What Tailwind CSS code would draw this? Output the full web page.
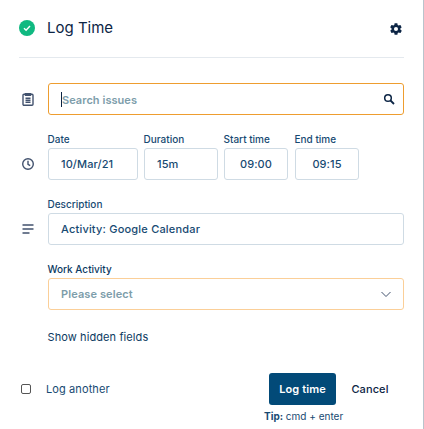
<!DOCTYPE html>
<html lang="en">
<head>
  <meta charset="UTF-8">
  <title>Log Time</title>
  <script src="https://cdn.jsdelivr.net/npm/@tailwindcss/browser@4"></script>
</head>
<body class="bg-white font-['Inter',sans-serif] overflow-hidden">
  <div class="w-[424px] h-[429px] relative border-r border-[#b9c4cc] pl-[19px] pr-[19px] overflow-hidden">
    <!-- Header -->
    <header class="h-[58px] flex items-center justify-between border-b border-[#e4e9ee] pb-[1px]">
      <div class="flex items-center">
        <svg class="w-4 h-4 mr-3" viewBox="0 0 16 16">
          <circle cx="8" cy="8" r="8" fill="#10b981"/>
          <path d="M5 8.200l2.100 2.100L11 6" fill="none" stroke="#fff" stroke-width="1.400"/>
        </svg>
        <h1 class="text-[15px] leading-6 text-[#0c2545]">Log Time</h1>
      </div>
      <svg class="w-3.5 h-3.5 mr-[1px] mt-0.5" viewBox="0 0 24 24" fill="#0c2545">
        <path d="M19.4 13c.1-.3.1-.7.1-1s0-.7-.1-1l2.100-1.600c.2-.2.2-.4.1-.6l-2-3.500c-.1-.2-.4-.3-.6-.2l-2.500 1c-.5-.4-1.100-.7-1.700-1l-.4-2.600C14.400 2.200 14.200 2 14 2h-4c-.2 0-.4.2-.5.4l-.4 2.600c-.6.3-1.200.6-1.700 1l-2.500-1c-.2-.1-.5 0-.6.2l-2 3.500c-.1.2-.1.4.1.6L4.500 11c0 .3-.1.7-.1 1s0 .7.1 1l-2.100 1.600c-.2.2-.2.4-.1.6l2 3.500c.1.2.4.3.6.2l2.500-1c.5.4 1.100.7 1.700 1l.4 2.600c.1.3.3.5.5.5h4c.2 0 .4-.2.5-.4l.4-2.600c.6-.3 1.200-.6 1.700-1l2.500 1c.2.1.5 0 .6-.2l2-3.500c.1-.2.1-.4-.1-.6L19.400 13zM12 15.500a3.500 3.500 0 1 1 0-7 3.500 3.500 0 0 1 0 7z"/>
      </svg>
    </header>

    <!-- Issue search -->
    <div class="flex items-center mt-[25px]">
      <svg class="w-3.5 h-3.5 ml-0.5 mr-[13px]" viewBox="0 0 14 14" fill="none" stroke="#42526e" stroke-width="1.400">
        <rect x="2" y="2.200" width="10" height="11" rx="1"/>
        <path d="M4.500 1.600h5V3.400h-5zM4.500 6.200h5M4.500 8.200h5M4.500 10.300h5"/>
      </svg>
      <div class="flex-1 h-8 border border-[#ee9d2f] rounded-[3px] flex items-center pl-3 pr-2 justify-between">
        <span class="text-[11px] font-semibold tracking-[0.05px] text-[#7d9daa] border-l border-[#0c2545] leading-[14px] pt-[1px]">Search issues</span>
        <svg class="w-3 h-3" viewBox="0 0 12 12" fill="none" stroke="#0c2545">
          <circle cx="5" cy="5" r="3.300" stroke-width="1.500"/>
          <path d="M7.500 7.500L11 11" stroke-width="1.800"/>
        </svg>
      </div>
    </div>

    <!-- Date and time -->
    <div class="flex items-end mt-[18px]">
      <svg class="w-3.5 h-3.5 ml-0.5 mr-[13px] mb-[9px]" viewBox="0 0 14 14" fill="none" stroke="#42526e" stroke-width="1.400">
        <circle cx="7" cy="7" r="5.300"/>
        <path d="M7 3.800V7.300L9.200 8.700"/>
      </svg>
      <div class="flex">
        <label class="w-[90px] mr-[6px]">
          <span class="block text-[10px] leading-3 font-medium text-[#174a72] mb-[3px] -ml-[0.5px]">Date</span>
          <span class="h-8 border border-[#cfdbe4] rounded-[3px] flex items-center pl-3 text-[11px] font-medium tracking-[0.1px] text-[#174a72]">10/Mar/21</span>
        </label>
        <label class="w-[74px] mr-[6px]">
          <span class="block text-[10px] leading-3 font-medium text-[#174a72] mb-[3px] -ml-[0.5px]">Duration</span>
          <span class="h-8 border border-[#cfdbe4] rounded-[3px] flex items-center pl-3 text-[11px] font-medium tracking-[0.1px] text-[#174a72]">15m</span>
        </label>
        <label class="w-[64px] mr-[7px]">
          <span class="block text-[10px] leading-3 font-medium text-[#174a72] mb-[3px] -ml-[0.5px]">Start time</span>
          <span class="h-8 border border-[#cfdbe4] rounded-[3px] flex items-center justify-center text-[11px] font-medium tracking-[0.1px] text-[#174a72]">09:00</span>
        </label>
        <label class="w-[64px]">
          <span class="block text-[10px] leading-3 font-medium text-[#174a72] mb-[3px] -ml-[0.5px]">End time</span>
          <span class="h-8 border border-[#cfdbe4] rounded-[3px] flex items-center justify-center text-[11px] font-medium tracking-[0.1px] text-[#174a72]">09:15</span>
        </label>
      </div>
    </div>

    <!-- Description -->
    <div class="flex items-end mt-[18px]">
      <svg class="w-3.5 h-3.5 ml-0.5 mr-[13px] mb-[9px]" viewBox="0 0 14 14" fill="none" stroke="#42526e" stroke-width="1.500">
        <path d="M1.500 3h11M1.500 7h11M1.500 11h7"/>
      </svg>
      <label class="flex-1">
        <span class="block text-[10px] leading-3 font-medium text-[#174a72] mb-[3px] -ml-[0.5px]">Description</span>
        <span class="h-8 border border-[#cfdbe4] rounded-[3px] flex items-center pl-3 text-[11px] font-medium tracking-[0.2px] text-[#174a72]">Activity: Google Calendar</span>
      </label>
    </div>

    <!-- Work activity -->
    <label class="block ml-[29px] mt-[18px]">
      <span class="block text-[10px] leading-3 font-medium text-[#0c3a62] mb-[3px] -ml-[0.5px]">Work Activity</span>
      <span class="h-8 border border-[#fbcf98] rounded-[3px] flex items-center justify-between pl-3 pr-[12px] text-[11px] font-semibold tracking-[0.1px] text-[#7d9daa]">
        <span class="pt-[1px]">Please select</span>
        <svg class="w-2.5 h-2.5" viewBox="0 0 10 10" fill="none" stroke="#42526e" stroke-width="1">
          <path d="M.5 3l4.500 4.500L9.500 3"/>
        </svg>
      </span>
    </label>

    <p class="ml-[29px] -translate-x-[0.5px] mt-5 text-[11px] leading-[14px] tracking-[0.1px] text-[#0c3a62]">Show hidden fields</p>

    <!-- Footer -->
    <div class="flex justify-between mt-[29px]">
      <label class="flex items-center h-8">
        <span class="w-[10px] h-[10px] ml-[2px] border border-[#555] rounded-[2px] mr-[15px]"></span>
        <span class="text-[11px] tracking-[0.1px] text-[#174a72]">Log another</span>
      </label>
      <div class="flex flex-col">
        <div class="flex items-center">
          <button class="w-[67px] h-8 bg-[#024a78] rounded-[3px] text-[11px] font-semibold tracking-[0.1px] text-white">Log time</button>
          <span class="w-[68px] text-center text-[11px] font-medium tracking-[0.1px] text-[#0c2545]">Cancel</span>
        </div>
        <p class="-ml-[5px] mt-[5px] whitespace-nowrap text-[10px] leading-3 text-[#174a72]"><b class="font-bold">Tip:</b> cmd + enter</p>
      </div>
    </div>
  </div>
</body>
</html>
